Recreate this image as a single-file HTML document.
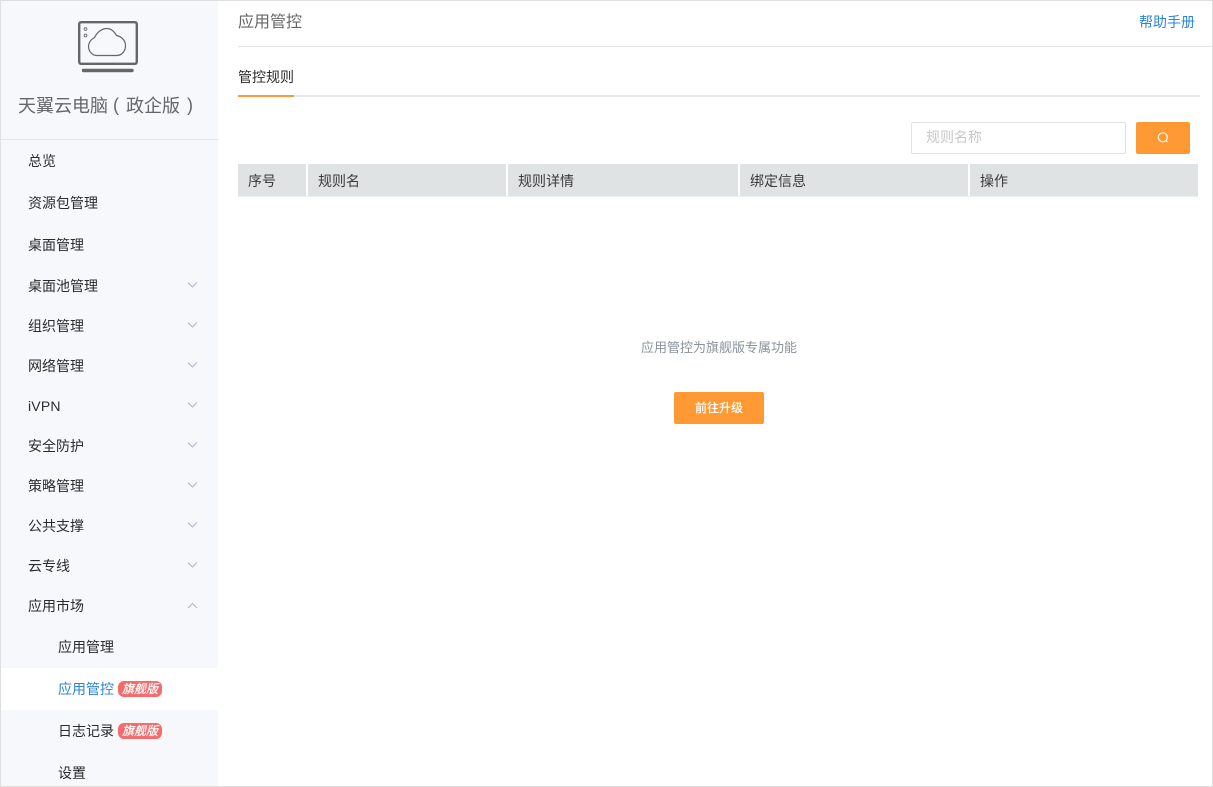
<!DOCTYPE html>
<html lang="zh-CN">
<head>
<meta charset="utf-8">
<title>应用管控</title>
<style>
html,body{margin:0;padding:0;background:#fff}
body{width:1213px;height:787px;position:relative;overflow:hidden;font-family:"Liberation Sans","Noto Sans CJK SC",sans-serif;font-size:14px;color:#333}
.a{position:absolute}
.t{position:absolute;line-height:20px;height:20px;white-space:nowrap}
.m{color:#2b2b2b;left:28px}
.s{color:#2b2b2b;left:58px}
.badge{position:absolute;left:118px;width:44px;height:16px;border-radius:6px;background:#f56c6c;color:#fff;font-size:12px;line-height:16px;text-align:center;font-style:italic;font-weight:normal;white-space:nowrap;-webkit-text-stroke:.25px #fff}
.th{position:absolute;top:164px;height:32px;background:#e0e3e4;line-height:34px;color:#3a3a3a;padding-left:10px;box-sizing:border-box}
svg{position:absolute;display:block}
</style>
</head>
<body>
<div class="a" style="left:0;top:0;width:1213px;height:1px;background:#dfdfdf"></div>
<div class="a" style="left:0;top:786px;width:1213px;height:1px;background:#dfdfdf"></div>
<div class="a" style="left:0;top:0;width:1px;height:787px;background:#dfdfdf"></div>
<div class="a" style="left:1212px;top:0;width:1px;height:787px;background:#dfdfdf"></div>

<div class="a" style="left:1px;top:1px;width:217px;height:785px;background:#f6f8fc"></div>
<div class="a" style="left:1px;top:139px;width:217px;height:1px;background:#e4e5e7"></div>
<div class="a" style="left:1px;top:668px;width:217px;height:42px;background:#fff"></div>

<svg style="left:70px;top:15px" width="75" height="65" viewBox="0 0 75 65" fill="none" stroke="#666">
<rect x="9.200" y="7.200" width="57.600" height="41.600" rx="2" stroke-width="2.400"/>
<circle cx="15.500" cy="14" r="1.400" stroke="#777" stroke-width="1"/>
<circle cx="15.500" cy="20.500" r="1.400" stroke="#777" stroke-width="1"/>
<path d="M27 40.500C21.500 40.500 18.500 35.500 18.500 31.500C18.500 27.500 21 24.500 24.500 22.500C27 17.500 31.500 13.500 37 13.500C41.500 13.500 44.500 17 46.500 20.500C52 21.500 55.500 26 55.500 30.500C55.500 36 52 40.500 46.500 40.500Z" stroke-width="1.200"/>
<path d="M13.500 55.500H62" stroke-width="3.400" stroke-linecap="round"/>
</svg>

<div class="t" style="left:18px;top:94px;height:24px;line-height:24px;font-size:18px;color:#666">天翼云电脑</div>
<div class="t" style="left:113px;top:93px;height:24px;line-height:24px;font-size:18px;color:#666">(</div>
<div class="t" style="left:126px;top:94px;height:24px;line-height:24px;font-size:18px;color:#666">政企版</div>
<div class="t" style="left:187px;top:93px;height:24px;line-height:24px;font-size:18px;color:#666">)</div>

<div class="t m" style="top:151px">总览</div>
<div class="t m" style="top:193px">资源包管理</div>
<div class="t m" style="top:235px">桌面管理</div>
<div class="t m" style="top:276px">桌面池管理</div>
<div class="t m" style="top:316px">组织管理</div>
<div class="t m" style="top:356px">网络管理</div>
<div class="t m" style="top:396px;letter-spacing:.2px">iVPN</div>
<div class="t m" style="top:436px">安全防护</div>
<div class="t m" style="top:476px">策略管理</div>
<div class="t m" style="top:516px">公共支撑</div>
<div class="t m" style="top:556px">云专线</div>
<div class="t m" style="top:596px">应用市场</div>
<div class="t s" style="top:637px">应用管理</div>
<div class="t s" style="top:679px;color:#2d84d8">应用管控</div>
<div class="badge" style="top:681px">旗舰版</div>
<div class="t s" style="top:721px">日志记录</div>
<div class="badge" style="top:723px">旗舰版</div>
<div class="t s" style="top:763px">设置</div>

<svg style="left:187px;top:281px" width="11" height="9" fill="none" stroke="#a9b8cc"><path d="M1 1.500L5.500 6L10 1.500"/></svg>
<svg style="left:187px;top:321px" width="11" height="9" fill="none" stroke="#a9b8cc"><path d="M1 1.500L5.500 6L10 1.500"/></svg>
<svg style="left:187px;top:361px" width="11" height="9" fill="none" stroke="#a9b8cc"><path d="M1 1.500L5.500 6L10 1.500"/></svg>
<svg style="left:187px;top:401px" width="11" height="9" fill="none" stroke="#a9b8cc"><path d="M1 1.500L5.500 6L10 1.500"/></svg>
<svg style="left:187px;top:441px" width="11" height="9" fill="none" stroke="#a9b8cc"><path d="M1 1.500L5.500 6L10 1.500"/></svg>
<svg style="left:187px;top:481px" width="11" height="9" fill="none" stroke="#a9b8cc"><path d="M1 1.500L5.500 6L10 1.500"/></svg>
<svg style="left:187px;top:521px" width="11" height="9" fill="none" stroke="#a9b8cc"><path d="M1 1.500L5.500 6L10 1.500"/></svg>
<svg style="left:187px;top:561px" width="11" height="9" fill="none" stroke="#a9b8cc"><path d="M1 1.500L5.500 6L10 1.500"/></svg>
<svg style="left:187px;top:601px" width="11" height="9" fill="none" stroke="#b5b5b5"><path d="M1 7L5.500 2.500L10 7"/></svg>

<div class="t" style="left:238px;top:12px;height:22px;line-height:22px;font-size:16px;color:#666">应用管控</div>
<div class="t" style="left:1139px;top:12px;color:#2d84d8;font-size:14px">帮助手册</div>
<div class="a" style="left:238px;top:46px;width:974px;height:1px;background:#e4e5e7"></div>

<div class="t" style="left:238px;top:67px;color:#2b2b2b">管控规则</div>
<div class="a" style="left:238px;top:95px;width:962px;height:2px;background:#e6e7f0"></div>
<div class="a" style="left:238px;top:95px;width:56px;height:2px;background:#ff9933"></div>

<div class="a" style="left:911px;top:122px;width:215px;height:32px;box-sizing:border-box;border:1px solid #e0e2e8;border-radius:2px;background:#fff"></div>
<div class="t" style="left:926px;top:127px;color:#c8c8c8">规则名称</div>
<div class="a" style="left:1136px;top:122px;width:54px;height:32px;background:#ff9933;border-radius:2px"></div>
<svg style="left:1156px;top:130px" width="14" height="15" fill="none" stroke="#fff"><circle cx="6.800" cy="7.300" r="4.500" stroke-width="1.200"/><path d="M10 10.500L11.500 12" stroke-width="1.200"/></svg>

<div class="th" style="left:238px;width:68px">序号</div>
<div class="th" style="left:308px;width:198px">规则名</div>
<div class="th" style="left:508px;width:230px">规则详情</div>
<div class="th" style="left:740px;width:228px">绑定信息</div>
<div class="th" style="left:970px;width:228px">操作</div>
<div class="a" style="left:238px;top:196px;width:960px;height:1px;background:#eceeef"></div>

<div class="t" style="left:641px;top:338px;font-size:13px;color:#8a929c">应用管控为旗舰版专属功能</div>
<div class="a" style="left:674px;top:392px;width:90px;height:32px;background:#ff9933;border-radius:2px;color:#fff;font-size:12px;line-height:32px;text-align:center;-webkit-text-stroke:.2px #fff">前往升级</div>
</body>
</html>
